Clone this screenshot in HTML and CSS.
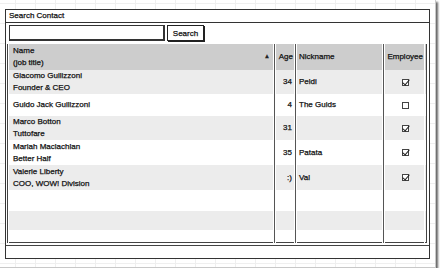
FILE: index.html
```html
<!DOCTYPE html>
<html lang="en">
<head>
    <meta charset="UTF-8">
    <title>Search Contact</title>
    <link rel="stylesheet" href="styles.css">
</head>
<body>
    <div class="canvas">
        <div class="panel">
            <div class="title">Search Contact</div>
            <div class="search-row">
                <input type="text" class="search-input">
                <button class="search-btn">Search</button>
            </div>

            <div class="grid">
                <div class="row head">
                    <div class="cell name">Name<br>(job title)<span class="sort">&#9650;</span></div>
                    <div class="cell age">Age</div>
                    <div class="cell nick">Nickname</div>
                    <div class="cell emp">Employee</div>
                </div>
                <div class="row alt h24">
                    <div class="cell name">Giacomo Guilizzoni<br>Founder &amp; CEO</div>
                    <div class="cell age">34</div>
                    <div class="cell nick">Peldi</div>
                    <div class="cell emp"><span class="box on"></span></div>
                </div>
                <div class="row h22">
                    <div class="cell name">Guido Jack Guilizzoni</div>
                    <div class="cell age">4</div>
                    <div class="cell nick">The Guids</div>
                    <div class="cell emp"><span class="box"></span></div>
                </div>
                <div class="row alt h24">
                    <div class="cell name">Marco Botton<br>Tuttofare</div>
                    <div class="cell age">31</div>
                    <div class="cell nick"></div>
                    <div class="cell emp"><span class="box on"></span></div>
                </div>
                <div class="row h25">
                    <div class="cell name">Mariah Maclachlan<br>Better Half</div>
                    <div class="cell age">35</div>
                    <div class="cell nick">Patata</div>
                    <div class="cell emp"><span class="box on"></span></div>
                </div>
                <div class="row alt h25">
                    <div class="cell name">Valerie Liberty<br>COO, WOW! Division</div>
                    <div class="cell age">:)</div>
                    <div class="cell nick">Val</div>
                    <div class="cell emp"><span class="box on"></span></div>
                </div>
                <div class="row h21">
                    <div class="cell name"></div><div class="cell age"></div><div class="cell nick"></div><div class="cell emp"></div>
                </div>
                <div class="row alt h19">
                    <div class="cell name"></div><div class="cell age"></div><div class="cell nick"></div><div class="cell emp"></div>
                </div>
                <div class="row h13">
                    <div class="cell name"></div><div class="cell age"></div><div class="cell nick"></div><div class="cell emp"></div>
                </div>
            </div>

            <div class="footer"></div>
        </div>
    </div>
</body>
</html>
```

FILE: styles.css
```css
body { margin: 0; background: #fff; font-family: "Liberation Sans", Arial, sans-serif; font-size: 8px; color: #111; -webkit-text-stroke: 0.25px #111; }

.canvas {
    width: 435px; height: 267px; position: relative;
    background-color: #fff;
    background-image: linear-gradient(to right, #efefef 1px, transparent 1px), linear-gradient(to bottom, #efefef 1px, transparent 1px);
    background-size: 20px 20px;
    background-position: 15px 3px;
    border-right: 1px solid #c8c8c8; border-bottom: 1px solid #c8c8c8;
    box-shadow: 2px 2px 2px #666;
}

.panel {
    position: absolute; left: 5px; top: 9px;
    width: 423px; height: 248px;
    border: 1px solid #333; background: #fff;
    display: flex; flex-direction: column;
}

.title { height: 12px; line-height: 12px; padding-left: 3px; border-bottom: 1px solid #333; }

.search-row { height: 21px; display: flex; align-items: flex-start; padding-top: 2px; box-sizing: border-box; }
.search-input {
    margin: 0 0 0 3px; width: 156px; height: 16px; box-sizing: border-box; padding: 0;
    border: 1px solid #333; border-right-width: 2px; border-bottom-width: 2px; outline: none; background: #fff;
}
.search-btn {
    margin: 0 0 0 2px; width: 37px; height: 16px; box-sizing: border-box; padding: 0;
    border: 1px solid #222; background: #fff; box-shadow: 1px 1px 0 #222;
    font-family: inherit; font-size: 8px; color: #111; -webkit-text-stroke: 0.25px #111;
}

.grid { margin-left: 1px; width: 420px; height: 199px; box-sizing: border-box; border: 1px solid #444; border-top: none; }

.row { display: grid; grid-template-columns: 267px 21px 88px 41px; }
.row.head { height: 26px; background: #cdcdcd; }
.row.alt { background: #ececec; }
.h24 { height: 24px; } .h22 { height: 22px; } .h25 { height: 25px; }
.h21 { height: 21px; } .h19 { height: 19px; } .h13 { height: 13px; }

.cell {
    box-sizing: border-box; border-right: 1px solid #555; line-height: 12px;
    display: flex; align-items: center; box-shadow: inset 1px 0 #fff, inset -1px 0 #fff;
}
.cell.emp { border-right: none; justify-content: center; }
.cell.name { padding-left: 5px; position: relative; }
.cell.age { justify-content: flex-end; padding-right: 3px; }
.cell.nick { padding-left: 3px; }
.head .cell.name { display: block; padding-top: 1px; }
.head .cell.age { padding-right: 2px; }
.head .cell.emp { justify-content: flex-end; padding-right: 2px; }

.sort { position: absolute; right: 4px; top: 9px; font-size: 6px; line-height: 6px; color: #222; }

.box {
    width: 7px; height: 7px; border: 1px solid #444; box-sizing: border-box;
    position: relative; margin-left: 1px; background: #fff;
}
.box.on::after {
    content: ""; position: absolute; left: 1px; top: -2px; width: 3px; height: 6px;
    border-right: 1.5px solid #222; border-bottom: 1.5px solid #222; transform: rotate(40deg);
}

.footer { margin-top: 2px; flex: 1; border-top: 1px solid #444; }
```
